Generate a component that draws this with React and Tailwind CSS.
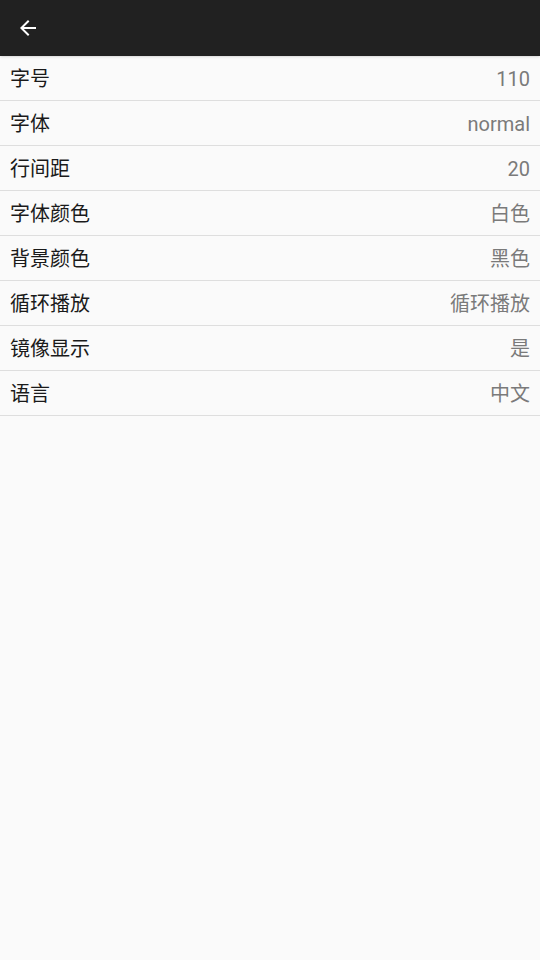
const items = [
  { label: '字号', value: '110' },
  { label: '字体', value: 'normal' },
  { label: '行间距', value: '20' },
  { label: '字体颜色', value: '白色' },
  { label: '背景颜色', value: '黑色' },
  { label: '循环播放', value: '循环播放' },
  { label: '镜像显示', value: '是' },
  { label: '语言', value: '中文' },
]

export default function App() {
  return (
    <div
      className="min-h-[960px] bg-[#fafafa]"
      style={{ fontFamily: 'Roboto, "Noto Sans CJK SC", sans-serif' }}
    >
      <div className="h-14 bg-[#212121] flex items-center px-4 shadow">
        <svg width="24" height="24" viewBox="0 0 24 24" fill="#ffffff">
          <path d="M20 11H7.83l5.59-5.59L12 4l-8 8 8 8 1.41-1.41L7.83 13H20v-2z" />
        </svg>
      </div>
      <div>
        {items.map((it) => (
          <div
            key={it.label}
            className="h-[45px] flex items-center justify-between px-[10px] pt-[2px] border-b border-[#dedede]"
          >
            <span className="text-[20px] text-[#1a1a1a]">{it.label}</span>
            <span className="text-[20px] text-[#7a7a7a]">{it.value}</span>
          </div>
        ))}
      </div>
    </div>
  )
}
